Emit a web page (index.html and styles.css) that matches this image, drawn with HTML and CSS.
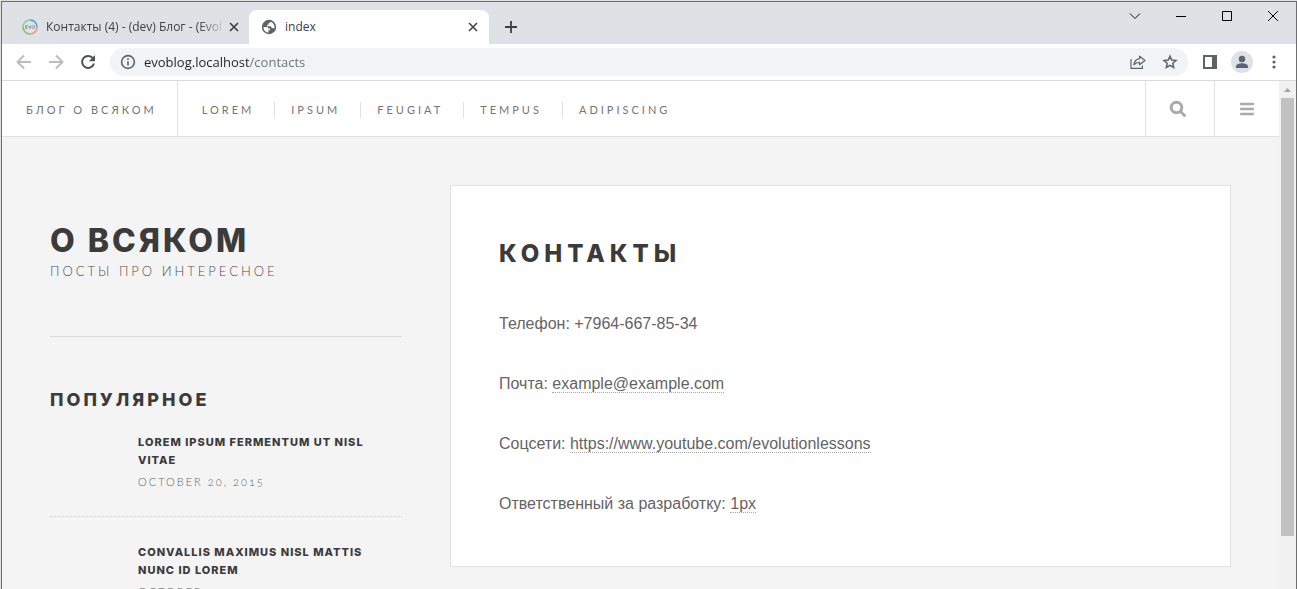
FILE: index.html
```html
<!DOCTYPE html>
<html lang="ru">
<head>
<meta charset="utf-8">
<title>index</title>
<link rel="stylesheet" href="styles.css">
</head>
<body>
<div class="window">
  <div class="tabstrip">
    <div class="tab tab-first">
      <svg class="icon16" viewBox="0 0 16 16" fill="none" stroke-width="1.6"><path d="M8 1a7 7 0 0 1 7 7" stroke="#4aa3d8"/><path d="M15 8a7 7 0 0 1-7 7" stroke="#f0967c"/><path d="M8 15a7 7 0 0 1-7-7" stroke="#7fc66b"/><path d="M1 8a7 7 0 0 1 7-7" stroke="#8ccf86"/><path d="M3.500 6.500h2M3.500 8h1.700M3.500 9.500h2M3.800 6.500v3M6.500 6.500l1.300 3 1.200-3" stroke="#888" stroke-width=".8"/><circle cx="11.300" cy="8" r="1.400" stroke="#888" stroke-width=".8"/></svg>
      <span class="tab-title tab-title-fade">Контакты (4) - (dev) Блог - (Evol</span>
      <button class="tab-close" aria-label="Закрыть вкладку"><svg viewBox="0 0 10 10" width="10" height="10"><path d="M1 1l8 8M9 1L1 9" stroke="#3c4043" stroke-width="1.700"/></svg></button>
    </div>
    <div class="tab tab-active">
      <svg class="icon16" viewBox="0 0 16 16"><circle cx="8" cy="8" r="7.200" fill="#5f6368"/><path d="M2.400 8.200 5.600 8c1.300 0 1.700.7 1.700 1.600H9v1.600H7.400v2.400C4.600 13.400 2.500 11 2.400 8.200zM9.500 2.700c-.2 1-1.200 1.100-1.900 1.300v1.700H6v1.500h3.700c.7.300.8 1 .9 1.700h1.700c.4.100.6.600.9 1a5.800 5.800 0 0 0-3.700-7.200z" fill="#fff"/></svg>
      <span class="tab-title">index</span>
      <button class="tab-close" aria-label="Закрыть вкладку"><svg viewBox="0 0 10 10" width="10" height="10"><path d="M1 1l8 8M9 1L1 9" stroke="#3c4043" stroke-width="1.500"/></svg></button>
    </div>
    <button class="new-tab" aria-label="Новая вкладка"><svg viewBox="0 0 12 12" width="12" height="12"><path d="M6 0v12M0 6h12" stroke="#3c4043" stroke-width="1.800"/></svg></button>
    <div class="window-controls">
      <button aria-label="Поиск вкладок"><svg viewBox="0 0 12 12" width="12" height="12" fill="none" stroke="#111"><path d="M1 3.500l5 5 5-5"/></svg></button>
      <button aria-label="Свернуть"><svg viewBox="0 0 12 12" width="12" height="12" fill="none" stroke="#000"><path d="M1 6.500h10"/></svg></button>
      <button aria-label="Развернуть"><svg viewBox="0 0 12 12" width="12" height="12" fill="none" stroke="#000"><path d="M1.500 1.500h9v9h-9z"/></svg></button>
      <button aria-label="Закрыть"><svg viewBox="0 0 12 12" width="12" height="12" fill="none" stroke="#000"><path d="M1 1l10 10M11 1L1 11"/></svg></button>
    </div>
  </div>

  <div class="toolbar">
    <button class="tool" aria-label="Назад"><svg viewBox="0 0 16 16" width="16" height="16" fill="none" stroke="#babcbe" stroke-width="1.900"><path d="M15 8H2M8 1.500L1.500 8 8 14.500"/></svg></button>
    <button class="tool" aria-label="Вперёд"><svg viewBox="0 0 16 16" width="16" height="16" fill="none" stroke="#babcbe" stroke-width="1.900"><path d="M1 8h13M8 1.500L14.500 8 8 14.500"/></svg></button>
    <button class="tool" aria-label="Обновить"><svg viewBox="0 0 16 16" width="16" height="16"><path d="M13 4.400A6 6 0 1 0 13.900 9.500" fill="none" stroke="#4f5357" stroke-width="2"/><path d="M15 1v6.200H8.800z" fill="#4f5357"/></svg></button>
    <div class="omnibox">
      <svg viewBox="0 0 16 16" width="16" height="16" fill="none" stroke="#5f6368" stroke-width="1.600"><circle cx="8" cy="8" r="6.400"/><path d="M8 7.200v4.200M8 4.300v1.700"/></svg>
      <input class="address" type="text" aria-label="Адрес" value="evoblog.localhost/contacts">
      <button aria-label="Поделиться"><svg viewBox="0 0 16 16" width="16" height="16" fill="none" stroke="#5f6368" stroke-width="1.200"><path d="M1 5v9.400h11.400v-3"/><path d="M9.600 2.200L15 6.500l-5.400 4.200V8.400C7 8.400 5.300 9 3.900 10.800 4.300 7.500 6.200 5 9.600 4.600z" stroke-linejoin="round"/></svg></button>
      <button aria-label="Добавить в закладки"><svg viewBox="0 0 16 16" width="16" height="16" fill="none" stroke="#5f6368" stroke-width="1.500"><path d="M8 2.200l1.700 3.900 4.300.4-3.200 2.800.9 4.200L8 11.300l-3.700 2.200.9-4.200L2 6.500l4.300-.4z"/></svg></button>
    </div>
    <button class="tool" aria-label="Боковая панель"><svg viewBox="0 0 16 16" width="16" height="16"><path d="M1 1h14v14H1z" fill="#5f6368"/><path d="M3 3h7v10H3z" fill="#fff"/></svg></button>
    <button class="tool" aria-label="Профиль"><svg viewBox="0 0 22 22" width="22" height="22"><circle cx="11" cy="11" r="11" fill="#dee1e6"/><circle cx="11" cy="8" r="3.200" fill="#5a6478"/><path d="M5 17v-1.500c0-2.200 3.500-3.300 6-3.300s6 1.100 6 3.300V17z" fill="#5a6478"/></svg></button>
    <button class="tool" aria-label="Меню браузера"><svg viewBox="0 0 16 16" width="16" height="16" fill="#5f6368"><circle cx="8" cy="3" r="1.600"/><circle cx="8" cy="8" r="1.600"/><circle cx="8" cy="13" r="1.600"/></svg></button>
  </div>

  <div class="viewport">
    <div class="page">
      <header class="site-header">
        <a class="brand" href="#">Блог о всяком</a>
        <nav class="site-nav">
          <a href="#">Lorem</a>
          <a href="#">Ipsum</a>
          <a href="#">Feugiat</a>
          <a href="#">Tempus</a>
          <a href="#">Adipiscing</a>
        </nav>
        <button class="header-button search-button" aria-label="Поиск"><svg viewBox="0 0 18 18" width="18" height="18" fill="none" stroke="#aaa"><circle cx="7.500" cy="7.500" r="5.300" stroke-width="3"/><path d="M11.500 11.500l4 4" stroke-width="3" stroke-linecap="round"/></svg></button>
        <button class="header-button menu-button" aria-label="Меню"><svg viewBox="0 0 16 16" width="16" height="16" stroke="#aaa" stroke-width="2.300" stroke-linecap="round"><path d="M2 3h12M2 8h12M2 13h12"/></svg></button>
      </header>
      <div class="columns">
        <aside class="sidebar">
          <div class="intro">
            <h1>О всяком</h1>
            <p>Посты про интересное</p>
          </div>
          <section class="popular">
            <h2>Популярное</h2>
            <article class="post">
              <h3><a href="#">Lorem ipsum fermentum ut nisl vitae</a></h3>
              <time datetime="2015-10-20">October 20, 2015</time>
            </article>
            <article class="post">
              <h3><a href="#">Convallis maximus nisl mattis nunc id lorem</a></h3>
              <time datetime="2015-10">October</time>
            </article>
          </section>
        </aside>
        <main class="card">
          <h2>Контакты</h2>
          <p>Телефон: +7964-667-85-34</p>
          <p>Почта: <a href="#">example@example.com</a></p>
          <p>Соцсети: <a href="#">https://www.youtube.com/evolutionlessons</a></p>
          <p>Ответственный за разработку: <a href="#">1px</a></p>
        </main>
      </div>
    </div>
    <div class="scrollbar">
      <svg viewBox="0 0 17 17" width="17" height="17"><path d="M5 11h7L8.500 7z" fill="#a3a3a3"/></svg>
      <div class="thumb"></div>
    </div>
  </div>
</div>
</body>
</html>
```
FILE: styles.css
```css
* { box-sizing: border-box; }

body {
  margin: 0;
  height: 100vh;
  overflow: hidden;
  padding: 1px 0 0 1px;
  background: #dde0dd;
  font-family: "Liberation Sans", Arial, sans-serif;
}

h1, h2, h3, p { margin: 0; }
a { color: inherit; text-decoration: none; }
svg { display: block; flex: none; }

button {
  display: flex;
  flex: none;
  align-items: center;
  justify-content: center;
  padding: 0;
  border: 0;
  background: none;
}

.window {
  display: flex;
  flex-direction: column;
  height: 100%;
  border: 1px solid #6e6e6e;
  border-bottom: 0;
  background: #fff;
}

/* Browser tabs */
.tabstrip {
  display: flex;
  flex: none;
  height: 42px;
  padding: 8px 0 0 8px;
  background: #dee1e6;
  font: 12px/16px "Open Sans", "Noto Sans", sans-serif;
  color: #3c4043;
}

.icon16 { width: 16px; height: 16px; margin-right: 8px; }

.tab {
  display: flex;
  align-items: center;
  width: 240px;
  height: 34px;
  padding: 0 8px 0 12px;
}

.tab-first { width: 239px; padding-right: 7px; }
.tab-active { border-radius: 8px 8px 0 0; background: #fff; }

.tab-title {
  flex: 1;
  overflow: hidden;
  white-space: nowrap;
}

.tab-title-fade { mask-image: linear-gradient(to right, #000 85%, transparent); }
.tab-close { width: 16px; height: 16px; }
.new-tab { width: 28px; height: 34px; margin-left: 8px; }

.window-controls {
  display: flex;
  height: 12px;
  margin-left: auto;
}

.window-controls button { width: 46px; height: 12px; }

/* Browser toolbar */
.toolbar {
  display: flex;
  flex: none;
  align-items: center;
  height: 37px;
  padding: 0 6px;
  border-bottom: 1px solid #d9dadb;
}

.tool { width: 32px; height: 32px; }

.omnibox {
  display: flex;
  flex: 1;
  align-items: center;
  gap: 8px;
  height: 28px;
  margin: 0 6px;
  padding: 0 6px 0 10px;
  border-radius: 14px;
  background: #f1f3f4;
}

.omnibox button { width: 24px; height: 24px; }

.address {
  flex: 1;
  min-width: 0;
  padding: 0;
  border: 0;
  outline: 0;
  font: 13px/20px "Open Sans", "Noto Sans", sans-serif;
  color: #202124;
  background: linear-gradient(to right, #202124 105px, #6b6f73 105px);
  background-clip: text;
  -webkit-text-fill-color: transparent;
}

/* Page area */
.viewport {
  display: flex;
  flex: 1;
  min-height: 0;
}

.page {
  flex: 1;
  min-width: 0;
  overflow: hidden;
  background: #f4f4f4;
  color: #646464;
}

.scrollbar { flex: none; width: 17px; background: #f1f1f1; }
.thumb { height: 438px; margin: 0 2px; background: #c1c1c1; }

.site-header {
  display: flex;
  height: 56px;
  border-bottom: 1px solid #e0e0e0;
  background: #fff;
  font: 400 11px/16px Lato, sans-serif;
  color: #757575;
  letter-spacing: 3px;
  text-transform: uppercase;
}

.brand {
  display: flex;
  align-items: center;
  padding: 2px 20px 0 24px;
  border-right: 1px solid #e0e0e0;
}

.site-nav {
  display: flex;
  flex: 1;
  align-items: center;
  padding: 2px 0 0 8px;
}

.site-nav a { padding: 0 20px 0 16px; }
.site-nav a + a { border-left: 1px solid #e0e0e0; }

.header-button { border-left: 1px solid #e0e0e0; }
.search-button { width: 69px; padding-right: 4px; }
.menu-button { width: 65px; }

.columns {
  display: flex;
  align-items: flex-start;
  gap: 48px;
  padding: 48px;
}

/* Sidebar */
.sidebar {
  flex: none;
  width: 352px;
  font-family: Lato, sans-serif;
  text-transform: uppercase;
}

.sidebar h1, .sidebar h2, .sidebar h3, .card h2 {
  font-family: Inter, Lato, sans-serif;
  font-weight: 800;
  color: #3c3b3b;
  text-transform: uppercase;
}

.intro {
  padding: 36px 0 55px;
  border-bottom: 1px solid #d9d9d9;
}

.intro h1 {
  font-size: 32px;
  line-height: 40px;
  letter-spacing: 3px;
}

.intro p {
  font-size: 13px;
  font-weight: 300;
  line-height: 20px;
  letter-spacing: 3px;
  color: #505050;
}

.popular { padding-top: 50px; }

.popular h2 {
  font-size: 18px;
  line-height: 26px;
  letter-spacing: 3px;
}

.post {
  padding: 20px 0 22px 88px;
  letter-spacing: 2px;
}

.post + .post {
  padding-top: 26px;
  border-top: 1px dotted #d0d0d0;
}

.post h3 {
  font-size: 11px;
  line-height: 18px;
  letter-spacing: 1px;
}

.post time {
  display: block;
  padding-top: 1px;
  font-size: 11px;
  font-weight: 300;
  line-height: 24px;
  font-variant-numeric: oldstyle-nums;
}

/* Main card */
.card {
  flex: 1;
  min-width: 0;
  padding: 50px 48px 48px;
  border: 1px solid #e0e0e0;
  background: #fff;
  font-size: 16px;
  line-height: 28px;
}

.card h2 {
  margin-bottom: 38px;
  font-size: 24px;
  line-height: 36px;
  letter-spacing: 5px;
}

.card p + p { margin-top: 32px; }
.card a { border-bottom: 1px dotted #a8a8a8; }
```
